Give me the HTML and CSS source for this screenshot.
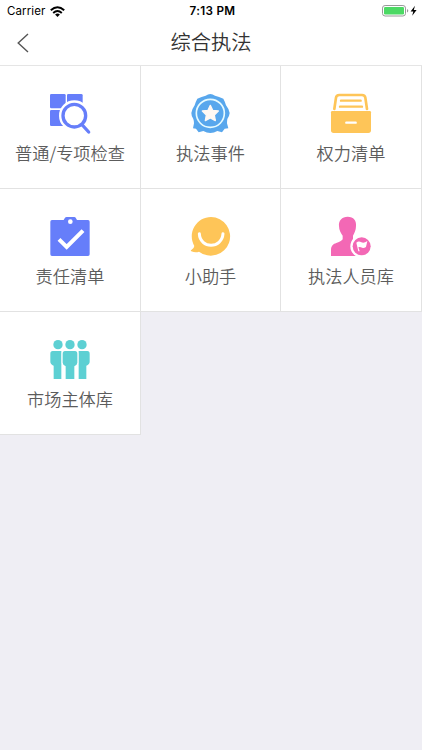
FILE: index.html
```html
<!DOCTYPE html>
<html lang="zh-CN">
<head>
<meta charset="utf-8">
<title>综合执法</title>
<link rel="stylesheet" href="styles.css">
</head>
<body>
<div class="status">
  <div class="carrier"><span>Carrier</span>
    <svg class="wifi" viewBox="0 0 15 11"><g fill="none" stroke="#000" stroke-width="2"><path d="M.8 4.2Q7.5-1.8 14.2 4.2"/><path d="M3.2 6.9Q7.5 3.1 11.8 6.9"/></g><path d="M5.1 8.5Q7.5 6.7 9.9 8.5L7.5 11z"/></svg>
  </div>
  <div class="time">7:13 PM</div>
  <div class="power">
    <svg viewBox="0 0 36 12"><rect x=".5" y=".5" width="23" height="10.5" rx="2.6" fill="#fff" stroke="#999"/><rect x="2" y="2" width="20" height="7.5" rx="1.2" fill="#4cd964"/><path d="M25 4v3.5q1.3-.4 1.3-1.75T25 4z" fill="#999"/><path d="M33 .7 28.6 6.5H31.3L30.2 10.7 34.6 4.9H31.8z"/></svg>
  </div>
</div>
<header class="nav">
  <svg class="back" viewBox="0 0 12 20"><path d="M11 1 1.2 10 11 19" fill="none" stroke="#555" stroke-width="1.4"/></svg>
  <h1>综合执法</h1>
</header>
<main class="grid">
  <a class="tile"><svg class="icon" viewBox="0 0 180 165"><g fill="#667efa"><rect x="30" y="27" width="47" height="43" rx="4"/><rect x="81" y="27" width="47" height="43" rx="4"/><rect x="30" y="75" width="47" height="48" rx="4"/></g><circle cx="103" cy="92" r="46" fill="#fff"/><circle cx="103" cy="92" r="34" fill="#fff" stroke="#667efa" stroke-width="10"/><path d="m127 120 19 21" stroke="#667efa" stroke-width="10" stroke-linecap="round"/></svg><span>普通/专项检查</span></a>
  <a class="tile"><svg class="icon" viewBox="0 0 180 165"><path d="M91 27Q98 27 105 32Q117 35 130 41Q135 50 138 61Q147 72 149 84Q148 94 142 102Q141 108 141 115L145 130L134 131L126 142L112 138Q102 144 91 144Q80 144 70 138L56 142L48 131L39 130L42 115Q42 108 40 102Q34 94 34 84Q36 72 44 61Q47 50 52 41Q65 35 77 32Q84 27 91 27z" fill="#58a7ed"/><circle cx="91" cy="85" r="42" fill="none" stroke="#e6fbff" stroke-width="5"/><path d="m91 61 7 15 17 2-12 12 3 17-15-8-15 8 3-17-12-12 17-2z" fill="#fff8f3" stroke="#fff8f3" stroke-width="4" stroke-linejoin="round"/></svg><span>执法事件</span></a>
  <a class="tile"><svg class="icon" viewBox="0 0 180 165"><g fill="none" stroke="#fec558" stroke-linecap="round"><path d="M43 72 48 38Q49 30 58 30H126Q135 30 136 38L141 72" stroke-width="8"/><path d="M63 47H122M60 65H126" stroke-width="7"/></g><path d="M37 78H149Q153 78 153 82V136Q153 144 145 144H41Q33 144 33 136V82Q33 78 37 78z" fill="#fec558"/><path d="M79 113H107" stroke="#fff" stroke-width="7" stroke-linecap="round"/></svg><span>权力清单</span></a>
  <a class="tile"><svg class="icon" viewBox="0 0 180 165"><path d="M36 36H71L75 29Q77 27 80 27H103Q106 27 107 29L111 36H144Q149 36 149 41V139Q149 144 144 144H36Q31 144 31 139V41Q31 36 36 36z" fill="#667efa"/><circle cx="91" cy="41" r="7" fill="#fff"/><path d="m57 94 23 23 49-49" fill="none" stroke="#fff" stroke-width="12"/></svg><span>责任清单</span></a>
  <a class="tile"><svg class="icon" viewBox="0 0 180 165"><path d="M93 27A58 58 0 1 1 57 131Q47 135 34 130Q31 128 34 126Q42 122 43 114A58 58 0 0 1 93 27z" fill="#fec558"/><path d="M58 77C60 123 126 123 129 77" fill="none" stroke="#fff" stroke-width="9" stroke-linecap="round"/></svg><span>小助手</span></a>
  <a class="tile"><svg class="icon" viewBox="0 0 180 165"><path d="M83 26C101 26 110 38 108 54C108 67 103 76 99 83V94Q101 99 115 104L128 110V144H33V128C33 112 40 108 49 105Q66 99 68 94V83C63 76 57 67 57 54C55 38 66 26 83 26z" fill="#f368b5"/><circle cx="125" cy="115" r="34" fill="#fff"/><circle cx="125" cy="115" r="27" fill="#f368b5"/><path d="M109 104Q116 98 124 103Q132 107 142 99L138 117Q130 123 123 118Q118 116 115 118L119 130H115z" fill="#fff"/></svg><span>执法人员库</span></a>
  <a class="tile"><svg class="icon" viewBox="0 0 180 165"><g fill="#5dd0d3"><circle cx="54" cy="41" r="14"/><circle cx="90" cy="41" r="14"/><circle cx="126" cy="41" r="14"/><path d="M38 60H64V144H41V104Q31 100 31 92V68Q31 60 38 60z"/><path d="M142 60H116V144H139V104Q149 100 149 92V68Q149 60 142 60z"/><path d="M75 60H105Q112 60 112 68V95Q112 101 103 106V144H77V106Q68 101 68 95V68Q68 60 75 60z" stroke="#fff" stroke-width="6" paint-order="stroke"/></g></svg><span>市场主体库</span></a>
</main>
</body>
</html>
```
FILE: styles.css
```css
* { box-sizing: border-box; }
body {
  margin: 0;
  min-height: 750px;
  background: #efeef4;
  font-family: "Noto Sans CJK SC", sans-serif;
}
.status {
  display: grid;
  grid-template-columns: 1fr auto 1fr;
  align-items: center;
  height: 22px;
  padding: 0 4px 0 7px;
  background: #fff;
  color: #000;
  font: 11.5px/22px Inter, sans-serif;
}
.carrier { display: flex; align-items: center; gap: 5px; letter-spacing: 0.1px; }
.wifi { width: 15px; height: 11px; }
.time { font-weight: 600; font-size: 11.7px; letter-spacing: 0.3px; }
.power { display: flex; justify-content: flex-end; }
.power svg { width: 36px; height: 12px; }
.nav {
  display: grid;
  grid-template-columns: 40px 1fr 40px;
  align-items: center;
  height: 44px;
  background: #fff;
  border-bottom: 1px solid #e5e5e5;
}
.back { width: 12px; height: 20px; margin: 0 0 2px 17px; }
h1 {
  margin: 0 0 5px;
  color: #333;
  font-size: 20.3px;
  font-weight: 350;
  line-height: 30px;
  text-align: center;
}
.grid { display: grid; grid-template-columns: 141px 140px 141px; }
.tile {
  display: flex;
  flex-direction: column;
  align-items: center;
  height: 123px;
  padding-top: 19px;
  background: #fff;
  border-right: 1px solid #e2e2e2;
  border-bottom: 1px solid #e2e2e2;
}
.icon { display: block; width: 60px; height: 55px; }
.tile:nth-child(3n) .icon { margin-right: 2px; }
.tile:nth-child(3n + 2) .icon { margin-right: 1px; }
.tile span {
  color: #5c5c5c;
  font-size: 17.2px;
  font-weight: 350;
  line-height: 26px;
  white-space: nowrap;
}
```
